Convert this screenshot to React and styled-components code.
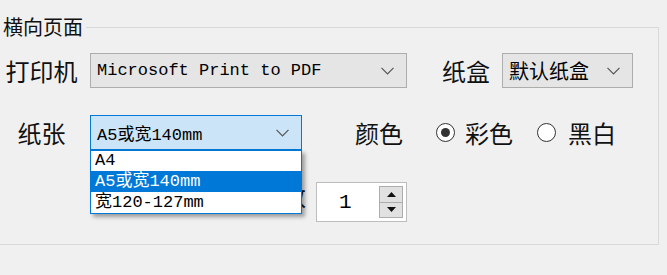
import React from "react";
import styled, { createGlobalStyle } from "styled-components";

const GlobalStyle = createGlobalStyle`
  html, body {
    margin: 0;
    padding: 0;
    background: #f0f0f0;
  }
  body {
    width: 667px;
    height: 275px;
    overflow: hidden;
    font-family: "Noto Sans CJK SC", "Liberation Sans", sans-serif;
    color: #111;
  }
`;

const cjk = `"Noto Sans CJK SC", sans-serif`;
const mono = `"Liberation Mono", "Noto Sans CJK SC", monospace`;

const Page = styled.div`
  width: 667px;
  height: 275px;
  padding-top: 27px;
  box-sizing: border-box;
  background: #f0f0f0;
`;

const Group = styled.div`
  position: relative;
  width: 659px;
  height: 218px;
  box-sizing: border-box;
  border: 1px solid #d9d9d9;
  border-left: none;
  padding-top: 25px;
`;

const Legend = styled.div`
  position: absolute;
  top: -15px;
  left: 0;
  padding: 0 3px;
  background: #f0f0f0;
  font-family: ${cjk};
  font-size: 20px;
  line-height: 28px;
`;

const Row = styled.div`
  display: flex;
  align-items: center;
  height: 35px;
  margin-top: ${(p) => p.$top || 0}px;
`;

const Label = styled.div`
  font-family: ${cjk};
  font-size: 24px;
  line-height: ${(p) => p.$lh || 35}px;
  width: ${(p) => (p.$w ? `${p.$w}px` : "auto")};
  text-align: center;
  margin-left: ${(p) => p.$ml || 0}px;
  flex-shrink: 0;
`;

const SelectWrap = styled.div`
  position: relative;
  margin-left: ${(p) => p.$ml || 0}px;
  flex-shrink: 0;
`;

const Select = styled.div`
  display: flex;
  align-items: center;
  justify-content: space-between;
  box-sizing: border-box;
  width: ${(p) => p.$w}px;
  height: 35px;
  padding: 0 12px 0 6px;
  border: 1px solid ${(p) => (p.$focus ? "#0078d7" : "#adadad")};
  background: ${(p) => (p.$focus ? "#cce4f7" : "#e5e5e5")};
  font-family: ${(p) => (p.$mono ? mono : cjk)};
  font-size: ${(p) => (p.$mono ? 17 : 20)}px;
  color: #000;
  white-space: pre;
`;

const List = styled.div`
  position: absolute;
  top: 35px;
  left: 0;
  width: 212px;
  box-sizing: border-box;
  border: 1px solid #0078d7;
  background: #fff;
  box-shadow: 3px 3px 4px rgba(0, 0, 0, 0.35);
  z-index: 10;
`;

const Item = styled.div`
  height: ${(p) => p.$h}px;
  line-height: ${(p) => p.$h}px;
  padding-left: 4px;
  font-family: ${mono};
  font-size: 17px;
  background: ${(p) => (p.$active ? "#0078d7" : "#fff")};
  color: ${(p) => (p.$active ? "#fff" : "#000")};
  white-space: pre;
`;

const Radio = styled.span`
  display: inline-flex;
  align-items: center;
  justify-content: center;
  box-sizing: border-box;
  width: 19px;
  height: 19px;
  border-radius: 50%;
  border: 1.5px solid #333;
  background: #fff;
  margin-left: ${(p) => p.$ml}px;
  flex-shrink: 0;

  &::after {
    content: "";
    width: 9px;
    height: 9px;
    border-radius: 50%;
    background: ${(p) => (p.$on ? "#333" : "transparent")};
  }
`;

const SpinRow = styled.div`
  display: flex;
  align-items: flex-start;
  margin-top: 32px;
  padding-left: 258px;
`;

const Spin = styled.div`
  display: flex;
  align-items: center;
  box-sizing: border-box;
  width: 91px;
  height: 40px;
  margin-left: 10px;
  border: 1px solid #bdbdbd;
  background: #fff;
  padding: 3px 3px 3px 0;
`;

const SpinValue = styled.div`
  flex: 1;
  padding-left: 22px;
  font-family: ${mono};
  font-size: 21px;
  color: #000;
`;

const SpinButtons = styled.div`
  display: flex;
  flex-direction: column;
  width: 24px;
  height: 32px;
`;

const SpinButton = styled.div`
  flex: 1;
  display: flex;
  align-items: center;
  justify-content: center;
  box-sizing: border-box;
  border: 1px solid #adadad;
  background: #e1e1e1;
  & + & {
    margin-top: -1px;
  }
`;

function Chevron() {
  return (
    <svg width="13" height="8" viewBox="0 0 13 8">
      <polyline points="0.5,0.8 6.5,6.8 12.5,0.8" fill="none" stroke="#555" strokeWidth="1.2" />
    </svg>
  );
}

function Arrow({ up }) {
  return (
    <svg width="9" height="5" viewBox="0 0 9 5">
      <polygon points={up ? "0,5 9,5 4.5,0" : "0,0 9,0 4.5,5"} fill="#111" />
    </svg>
  );
}

export default function App() {
  return (
    <Page>
      <GlobalStyle />
      <Group>
        <Legend>横向页面</Legend>

        <Row>
          <Label $w={83}>打印机</Label>
          <SelectWrap $ml={7}>
            <Select $w={317} $mono>
              <span>Microsoft Print to PDF</span>
              <Chevron />
            </Select>
          </SelectWrap>
          <Label $ml={35}>纸盒</Label>
          <SelectWrap $ml={12}>
            <Select $w={131}>
              <span>默认纸盒</span>
              <Chevron />
            </Select>
          </SelectWrap>
        </Row>

        <Row $top={27}>
          <Label $w={83}>纸张</Label>
          <SelectWrap $ml={7}>
            <Select $w={212} $mono $focus>
              <span>A5或宽140mm</span>
              <Chevron />
            </Select>
            <List>
              <Item $h={20}>A4</Item>
              <Item $h={21} $active>A5或宽140mm</Item>
              <Item $h={21}>宽120-127mm</Item>
            </List>
          </SelectWrap>
          <Label $ml={53}>颜色</Label>
          <Radio $ml={33} $on />
          <Label $ml={10}>彩色</Label>
          <Radio $ml={24} />
          <Label $ml={12}>黑白</Label>
        </Row>

        <SpinRow>
          <Label $lh={28}>份数</Label>
          <Spin>
            <SpinValue>1</SpinValue>
            <SpinButtons>
              <SpinButton>
                <Arrow up />
              </SpinButton>
              <SpinButton>
                <Arrow />
              </SpinButton>
            </SpinButtons>
          </Spin>
        </SpinRow>
      </Group>
    </Page>
  );
}
